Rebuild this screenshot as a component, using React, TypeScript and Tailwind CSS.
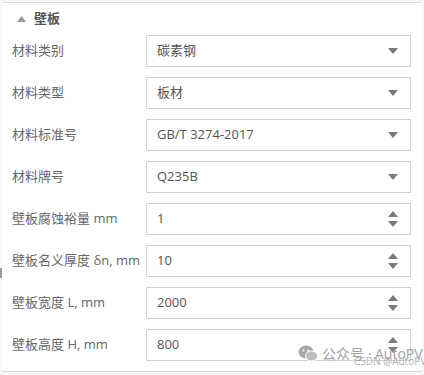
import React from "react";

type Row = { label: string; value: string; kind: "select" | "number" };

const rows: Row[] = [
  { label: "材料类别", value: "碳素钢", kind: "select" },
  { label: "材料类型", value: "板材", kind: "select" },
  { label: "材料标准号", value: "GB/T 3274-2017", kind: "select" },
  { label: "材料牌号", value: "Q235B", kind: "select" },
  { label: "壁板腐蚀裕量 mm", value: "1", kind: "number" },
  { label: "壁板名义厚度 δn, mm", value: "10", kind: "number" },
  { label: "壁板宽度 L, mm", value: "2000", kind: "number" },
  { label: "壁板高度 H, mm", value: "800", kind: "number" },
];

function Down() {
  return (
    <svg width="10" height="6" viewBox="0 0 10 6">
      <path d="M0 0 L10 0 L5 6 Z" fill="#7a7a7a" />
    </svg>
  );
}
function Up() {
  return (
    <svg width="10" height="6" viewBox="0 0 10 6">
      <path d="M0 6 L10 6 L5 0 Z" fill="#7a7a7a" />
    </svg>
  );
}

export default function App() {
  return (
    <div
      className="relative w-[424px] h-[375px] bg-[#f7f7f7] overflow-hidden"
      style={{ fontFamily: '"Open Sans", "Noto Sans CJK SC", sans-serif' }}
    >
      <div className="absolute left-0 top-[268px] w-[2px] h-[10px] bg-[#999]" />
      <div className="ml-[2px] mt-[2px] w-[420px] h-[370px] bg-white border-t border-b border-[#d9d9d9] flex flex-col">
        <div className="flex items-center h-[31px] pl-[15px] gap-[8px]">
          <svg width="9" height="6" viewBox="0 0 9 6">
            <path d="M0 6 L9 6 L4.5 0 Z" fill="#999" />
          </svg>
          <span className="text-[13px] font-bold text-[#555]">壁板</span>
        </div>
        <div className="flex flex-col gap-[10px] pt-[1px]">
          {rows.map((r) => (
            <div key={r.label} className="flex items-center h-[32px]">
              <div className="w-[144px] pl-[10px] text-[13px] text-[#666] whitespace-nowrap">
                {r.label}
              </div>
              <div className="w-[265px] h-[32px] border border-[#d0d0d0] flex items-center justify-between pl-[10px] pr-[12px]">
                <span className="text-[13px] text-[#555]">{r.value}</span>
                {r.kind === "select" ? (
                  <Down />
                ) : (
                  <div className="flex flex-col gap-[4px]">
                    <Up />
                    <Down />
                  </div>
                )}
              </div>
            </div>
          ))}
        </div>
      </div>
      <div className="absolute left-[298px] top-[343px] flex items-center gap-[4px] text-[14px] text-[#a0a0a0] whitespace-nowrap">
        <svg width="20" height="17" viewBox="0 0 20 17">
          <ellipse cx="8" cy="7" rx="7.5" ry="6.5" fill="#a8a8a8" />
          <ellipse cx="13.5" cy="11" rx="6" ry="5" fill="#bdbdbd" stroke="#fff" strokeWidth="1" />
          <circle cx="5.5" cy="5.5" r="1" fill="#fff" />
          <circle cx="10" cy="5.5" r="1" fill="#fff" />
        </svg>
        <span>公众号 · AutoPV</span>
      </div>
      <div className="absolute left-[354px] top-[354px] text-[10px] text-[#b0b0b0] whitespace-nowrap">
        CSDN @AutoPV
      </div>
    </div>
  );
}
